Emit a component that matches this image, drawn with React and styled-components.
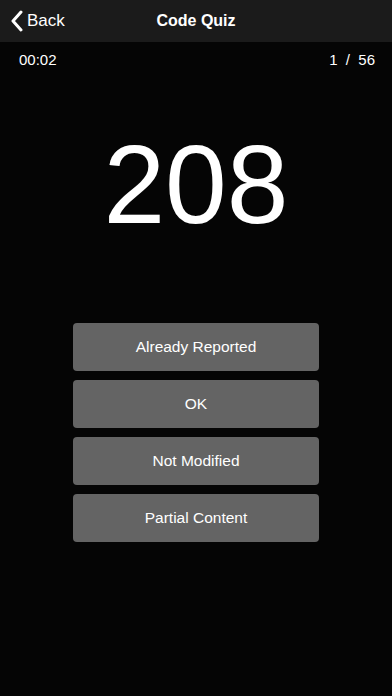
import React from 'react'
import styled, { createGlobalStyle } from 'styled-components'

const GlobalStyle = createGlobalStyle`
  html, body {
    margin: 0;
    padding: 0;
    background: #050505;
  }
  body {
    font-family: "Liberation Sans", Arial, sans-serif;
    color: #fff;
  }
`

const Screen = styled.div`
  width: 392px;
  height: 696px;
  display: flex;
  flex-direction: column;
  background-color: #050505;
  background-image: radial-gradient(#121212 0.6px, transparent 0.7px);
  background-size: 2px 2px;
  overflow: hidden;
`

const NavBar = styled.header`
  height: 42px;
  background: #1b1b1b;
  display: grid;
  grid-template-columns: 1fr auto 1fr;
  align-items: center;
  padding: 0 10px;
`

const BackButton = styled.button`
  display: flex;
  align-items: center;
  gap: 4px;
  background: none;
  border: none;
  padding: 0;
  color: #fff;
  font-family: inherit;
  font-size: 17px;
  cursor: pointer;
  justify-self: start;
`

const NavTitle = styled.h1`
  margin: 0;
  font-size: 16px;
  font-weight: 700;
`

const StatusRow = styled.div`
  display: flex;
  justify-content: space-between;
  align-items: center;
  padding: 8px 17px 0 19px;
  height: 19px;
  font-size: 15px;
`

const Code = styled.div`
  margin-top: 61px;
  text-align: center;
  font-size: 111px;
  line-height: 1;
`

const Choices = styled.div`
  margin-top: 82px;
  display: flex;
  flex-direction: column;
  align-items: center;
  gap: 9px;
`

const Choice = styled.button`
  width: 246px;
  height: 48px;
  border: none;
  border-radius: 4px;
  background: #646464;
  color: #fff;
  font-family: inherit;
  font-size: 15.5px;
  cursor: pointer;
`

const answers = ['Already Reported', 'OK', 'Not Modified', 'Partial Content']

export default function App() {
  return (
    <Screen>
      <GlobalStyle />
      <NavBar>
        <BackButton>
          <svg width="13" height="22" viewBox="0 0 13 22">
            <path d="M11 2 L3 11 L11 20" fill="none" stroke="#fff" strokeWidth="3" strokeLinecap="round" strokeLinejoin="round" />
          </svg>
          Back
        </BackButton>
        <NavTitle>Code Quiz</NavTitle>
        <span />
      </NavBar>
      <StatusRow>
        <span>00:02</span>
        <span>1 &nbsp;/ &nbsp;56</span>
      </StatusRow>
      <Code>208</Code>
      <Choices>
        {answers.map(a => (
          <Choice key={a}>{a}</Choice>
        ))}
      </Choices>
    </Screen>
  )
}
